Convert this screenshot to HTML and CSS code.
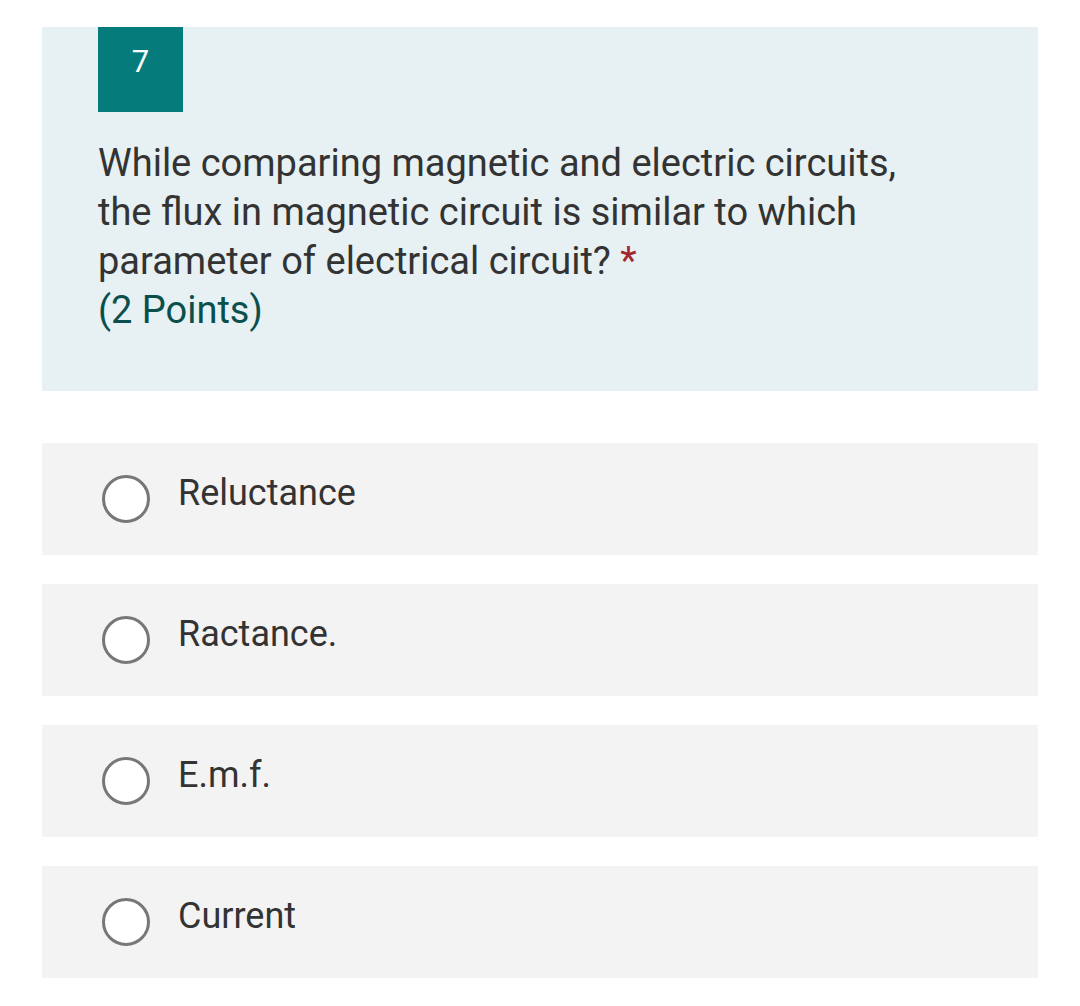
FILE: index.html
```html
<!DOCTYPE html>
<html>
<head>
<meta charset="utf-8">
<link rel="stylesheet" href="styles.css">
</head>
<body>
<div class="page">
  <section class="question">
    <div class="badge">7</div>
    <div class="qtext">While comparing magnetic and electric circuits, the flux in magnetic circuit is similar to which parameter of electrical circuit? <span class="req">*</span></div>
    <div class="points">(2 Points)</div>
  </section>
  <div class="options">
    <label class="option"><span class="radio"></span><span class="otext">Reluctance</span></label>
    <label class="option"><span class="radio"></span><span class="otext">Ractance.</span></label>
    <label class="option"><span class="radio"></span><span class="otext">E.m.f.</span></label>
    <label class="option"><span class="radio"></span><span class="otext">Current</span></label>
  </div>
</div>
</body>
</html>
```
FILE: styles.css
```css
html, body {
  margin: 0;
  padding: 0;
  background: #ffffff;
  font-family: Roboto, "Liberation Sans", sans-serif;
}
.page {
  padding: 27px 42px 0 42px;
}
.question {
  background: #e7f0f2;
  height: 364px;
  box-sizing: border-box;
  padding: 0 56px;
}
.badge {
  width: 85px;
  height: 85px;
  background: #057b7b;
  color: #ffffff;
  font-size: 31px;
  display: flex;
  justify-content: center;
  padding-top: 19px;
  box-sizing: border-box;
  line-height: 1;
}
.qtext {
  margin-top: 27px;
  font-size: 38px;
  line-height: 49px;
  color: #333333;
  width: 820px;
}
.req {
  color: #a4262c;
}
.points {
  font-size: 38px;
  line-height: 49px;
  color: #0b4f4d;
}
.options {
  margin-top: 52px;
  display: flex;
  flex-direction: column;
  gap: 29px;
}
.option {
  background: #f3f3f3;
  height: 112px;
  display: flex;
  align-items: center;
  padding-left: 60px;
  box-sizing: border-box;
}
.radio {
  width: 42px;
  height: 42px;
  border: 3px solid #777777;
  border-radius: 50%;
  background: #ffffff;
  flex: none;
}
.otext {
  margin-left: 28px;
  font-size: 36px;
  color: #333333;
  margin-top: -12px;
}
```
